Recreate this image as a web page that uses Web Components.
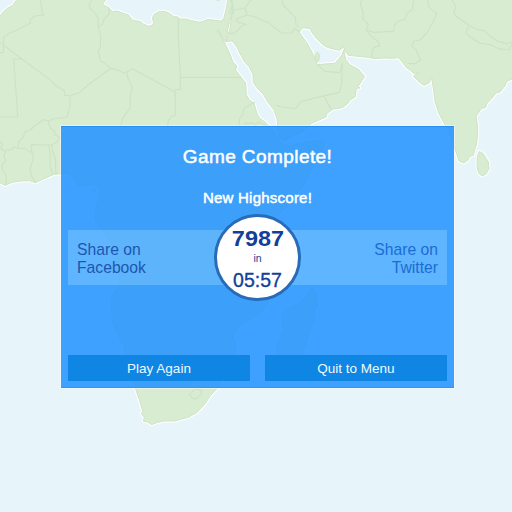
<!DOCTYPE html>
<html lang="en">
<head>
<meta charset="utf-8">
<title>Game Complete</title>
<style>
html,body{margin:0;height:100%;overflow:hidden}
body{font-family:"Liberation Sans",Arial,sans-serif}
</style>
</head>
<body>
<game-screen>
  <world-map slot="map"></world-map>
  <result-dialog>
    <span slot="title">Game Complete!</span>
    <span slot="subtitle">New Highscore!</span>
    <share-link slot="share" style="--ink:#1d56ae">Share on<br>Facebook</share-link>
    <score-badge slot="badge"><span slot="score">7987</span><span slot="time">05:57</span></score-badge>
    <share-link slot="share" style="--ink:#1c6cd2;--align:right">Share on<br>Twitter</share-link>
    <menu-button slot="actions">Play Again</menu-button>
    <menu-button slot="actions">Quit to Menu</menu-button>
  </result-dialog>
</game-screen>
<script>
const define = (name, html) => customElements.define(name, class extends HTMLElement {
  constructor() {
    super();
    this.attachShadow({mode: "open"}).innerHTML = html;
  }
});

define("game-screen", `<style>
:host{display:grid;width:512px;height:512px;overflow:hidden;background:#e7f5fa}
.map,.stage{grid-area:1/1;min-width:0;min-height:0}
.stage{display:flex;justify-content:flex-start;align-items:flex-start;padding:126px 0 0 61px;z-index:1}
</style><div class="map"><slot name="map"></slot></div><div class="stage"><slot></slot></div>`);

define("world-map", `<style>
:host{display:block;width:512px;height:512px}
svg{display:block}
.glow{fill:none;stroke:#fff;stroke-width:9;stroke-linejoin:round}
.land{fill:#d8ecd1;stroke:#cfe3c5;stroke-width:3;stroke-linejoin:round}
.borders{fill:none;stroke:#cde2c5;stroke-width:3.4;stroke-linejoin:round;stroke-linecap:round}
</style>
<svg width="512" height="512" viewBox="0 0 1536 1536">
<defs><g id="coasts">
<path d="M-20 -20H64L48 2L38 16L22 25L10 35L0 48L-20 65V545L0 549L15 556L38 547L62 543L88 542L107 548L130 537L162 523L185 521L208 522L222 535L232 557L255 558L275 553L293 560L300 575L297 590L290 615L283 648L290 672L305 690L325 720L345 760L350 790L357 830L357 858L335 890L330 945L350 1000L372 1040L376 1080L390 1120L407 1168L420 1205L429 1235L423 1240L433 1252L430 1264L443 1266L455 1274L470 1268L492 1263L525 1263L545 1257L565 1252L590 1238L612 1216L632 1186L652 1165L680 1120L707 1065L708 1030L698 1005L730 970L780 940L805 905L795 860L790 800L770 760L770 715L820 660L870 610L920 540L955 470L972 440L970 417L910 427L865 438L842 430L830 408L812 382L795 366L778 354L770 337L762 309L748 300L739 284L737 249L720 227L707 211L710 198L698 184L690 162L674 128L657 93L651 90L667 115L677 124L682 93L689 63L696 41L698 18L703 -20L686 -20L679 25L671 57L661 63L640 60L625 58L600 67L575 62L560 57L540 57L532 50L522 50L510 41L494 34L478 34L461 44L457 55L461 68L457 75L445 79L430 72L422 65L397 60L386 45L370 40L353 33L337 34L324 22L307 13L320 -4V-20Z"/>
<path d="M690 -20H1556V230L1520 244L1515 258L1500 276L1488 279L1474 297L1460 311L1457 323L1445 325L1435 339L1428 350L1432 372L1433 400L1430 430L1424 451L1420 466L1410 469L1403 481L1391 489L1377 483L1368 456L1356 420L1340 384L1317 341L1305 305L1301 270L1297 247L1295 232L1287 249L1272 256L1260 248L1240 228L1255 219L1240 220L1230 210L1220 204L1205 184L1195 173L1178 175L1155 174L1125 176L1105 172L1045 166L1033 151L1032 140L1019 151L1005 148L988 144L972 137L958 124L949 115L936 98L931 86L918 84L908 83L898 96L912 117L923 132L933 151L946 177L952 194L973 192L1004 190L1018 175L1027 162L1031 150L1037 178L1050 195L1074 207L1094 229L1074 260L1080 264L1069 265L1066 290L1050 300L1042 312L1026 323L1000 327L981 340L978 351L955 361L935 370L915 391L890 404L850 424L837 413L834 389L831 356L822 330L804 307L790 283L769 262L760 246L759 223L747 200L732 184L725 168L719 160L713 145L697 123L684 124L678 126L690 85L700 20Z"/>
<path d="M1438 454L1450 461L1465 485L1467 507L1457 523L1446 528L1436 520L1431 499L1432 469Z"/>
<path d="M936 858L947 876L953 920L945 930L945 955L926 1010L903 1072L865 1088L834 1070L829 1035L850 990L844 948L855 930L895 910L916 890Z"/>
</g></defs>
<use href="#coasts" class="glow"/><use href="#coasts" class="land"/>
<path class="land" d="M646 -3L653 2L663 -3ZM946 162L953 156L958 165L957 180L950 186L945 177ZM276 570L283 565L288 572L281 578Z"/>
<g class="borders">
<path d="M122 0L126 35L131 45L105 48L89 60L93 68L70 80L51 91L31 98L12 112L10 135L65 177L157 244L164 255L193 272L194 286L210 287L238 278L268 252L333 205L312 188L301 184L295 154L301 140L302 108L295 82L309 71L312 58L328 42L326 22M295 82L295 55L283 38L270 25L267 12L276 0M0 129H10V158H0M65 177H41L53 345L53 351H0M210 287V320L201 351L167 355L145 363L131 359L102 379L92 390L75 395L69 414L58 422L53 445M333 205L355 211L373 220L397 206L526 276V346L515 349L505 362L502 380M381 217L384 234L397 264L391 285L390 325L369 352L361 380L381 402L388 424M145 363L150 384L165 395L164 404L179 412L171 427L155 435L94 434V453L100 476L90 507L95 529L107 548M53 445L75 445L88 456L101 456M53 445L40 440L36 449L18 450L12 470L18 482L7 492L7 510L18 525L19 554M0 424L7 433L3 447L13 453M145 435L150 455L150 500L158 520M155 435L158 455L166 475L168 522"/>
<path d="M535 57V110L541 225V269H526M541 232H722M764 307L732 325L727 347L719 354L717 380M732 376L738 367L744 373L751 368L761 370L766 376L774 366L790 373L814 386M689 39L699 42L702 30L735 24L752 0M692 0L697 15L689 39M735 24L741 45L765 51L805 68L826 85L846 99H877L884 85L898 95M741 45L709 57L711 66L738 73L723 80L712 93L698 101L682 99M847 0L849 15L866 31L886 53L888 74L895 80M830 317L846 321L887 326L902 305L950 293L1018 277L1025 251L1027 189M952 194L975 214L1020 218L1027 189M973 288L992 327M1084 0L1081 12L1089 36V58L1105 72L1098 90L1122 97L1181 94L1183 76L1192 65L1215 57L1221 40L1237 28L1241 0M1098 90L1112 107L1133 123L1140 137L1122 142L1116 157V174M1283 0L1286 20L1299 31L1311 40L1299 65L1281 98L1261 120L1241 123L1236 139L1247 148L1262 180L1245 191L1225 190M1356 0L1368 20L1361 39L1370 50L1389 63L1410 78L1430 88L1455 93L1466 106L1492 123L1521 131L1536 125M1405 81L1397 98L1411 111L1440 130L1468 133L1496 146L1528 150L1536 131M568 1183L586 1166L606 1172L602 1184L585 1198L574 1191Z"/>
</g></svg>`);

define("result-dialog", `<style>
:host{box-sizing:border-box;display:grid;grid-template-rows:104.3px 55.2px 69.5px 27px;width:393px;height:262px;padding:0 7px;background:rgba(37,147,255,.87);
box-shadow:0 0 0 1px rgba(255,255,255,.45),inset 0 1px #288ff2,inset 0 -1px #2f96f8;color:#fff}
.head{text-align:center;white-space:nowrap}
.title{font-size:19px;line-height:22px;margin-top:20px;letter-spacing:.43px;-webkit-text-stroke:.5px #fff}
.sub{font-size:15px;line-height:18px;margin-top:21px;letter-spacing:.24px;-webkit-text-stroke:.5px #fff}
.share{position:relative;display:flex;justify-content:space-between;align-items:center;background:rgba(146,213,255,.4)}
.badge{position:absolute;left:146px;top:-16px}
.actions{grid-row:4;display:grid;grid-template-columns:182px 182px;column-gap:15px}
</style>
<div class="head"><div class="title"><slot name="title"></slot></div><div class="sub"><slot name="subtitle"></slot></div></div>
<div class="share"><slot name="share"></slot><div class="badge"><slot name="badge"></slot></div></div>
<div class="actions"><slot name="actions"></slot></div>`);

define("share-link", `<style>
:host{display:block;padding:2px 9px 0;color:var(--ink);font-size:15.7px;line-height:18px;text-align:var(--align,left);white-space:nowrap}
</style><slot></slot>`);

define("score-badge", `<style>
:host{box-sizing:border-box;display:flex;flex-direction:column;align-items:center;width:87px;height:87px;border:3.5px solid #286bb8;border-radius:50%;background:#fff;color:#123f98;white-space:nowrap}
.score{font-size:21.5px;font-weight:bold;line-height:24px;margin-top:10px;transform:scaleX(1.09)}
.in{font-size:10.5px;line-height:12px;margin-top:1px}
.time{font-size:19.5px;line-height:22px;margin-top:5px;-webkit-text-stroke:.35px #123f98}
</style><div class="score"><slot name="score"></slot></div><div class="in">in</div><div class="time"><slot name="time"></slot></div>`);

define("menu-button", `<style>
:host{display:flex;justify-content:center;align-items:center;box-sizing:border-box;padding-top:1px;height:26.5px;background:#0f85e4;color:#f2f9ff;font-size:13.5px;line-height:16px;white-space:nowrap;cursor:pointer}
</style><span><slot></slot></span>`);
</script>
</body>
</html>
